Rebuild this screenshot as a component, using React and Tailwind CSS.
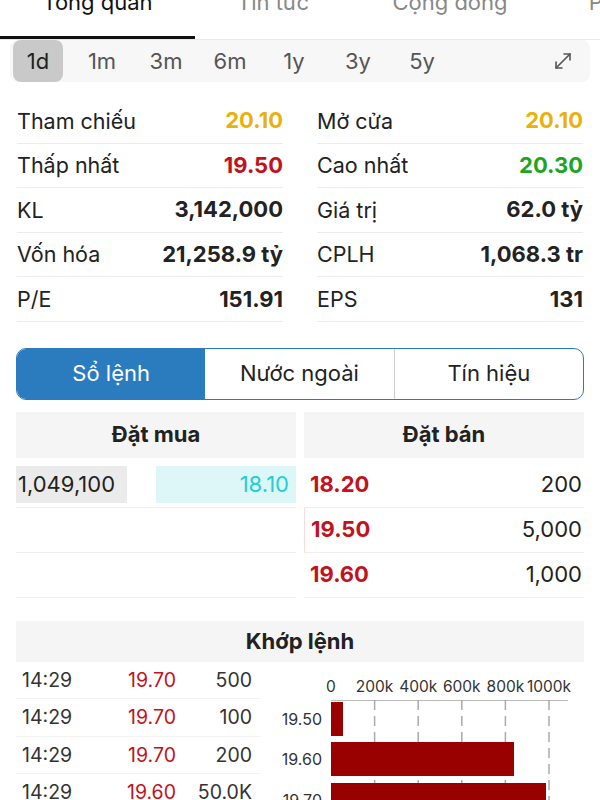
import React from 'react';
import { MoveDiagonal } from 'lucide-react';

const font = { fontFamily: 'Inter, "Noto Sans", sans-serif' };

const topTabs = [
    { label: 'Tổng quan', w: 'w-[195px]', active: true },
    { label: 'Tin tức', w: 'w-[156px]' },
    { label: 'Cộng đồng', w: 'w-[198px]' },
    { label: 'Phân tích', w: 'w-[176px]' },
];

const periods = ['1d', '1m', '3m', '6m', '1y', '3y', '5y'];

const leftStats = [
    { label: 'Tham chiếu', value: '20.10', color: 'text-[#e9b10f]' },
    { label: 'Thấp nhất', value: '19.50', color: 'text-[#c2121c]' },
    { label: 'KL', value: '3,142,000', color: 'text-[#222]' },
    { label: 'Vốn hóa', value: '21,258.9 tỷ', color: 'text-[#222]' },
    { label: 'P/E', value: '151.91', color: 'text-[#222]' },
];

const rightStats = [
    { label: 'Mở cửa', value: '20.10', color: 'text-[#e9b10f]' },
    { label: 'Cao nhất', value: '20.30', color: 'text-[#1ea51e]' },
    { label: 'Giá trị', value: '62.0 tỷ', color: 'text-[#222]' },
    { label: 'CPLH', value: '1,068.3 tr', color: 'text-[#222]' },
    { label: 'EPS', value: '131', color: 'text-[#222]' },
];

const asks = [
    { price: '18.20', vol: '200' },
    { price: '19.50', vol: '5,000' },
    { price: '19.60', vol: '1,000' },
];

const trades = [
    { time: '14:29', price: '19.70', vol: '500' },
    { time: '14:29', price: '19.70', vol: '100' },
    { time: '14:29', price: '19.70', vol: '200' },
    { time: '14:29', price: '19.60', vol: '50.0K' },
];

const StatColumn = ({ rows }) => (
    <div className="flex flex-col">
        {rows.map(r => (
            <div key={r.label} className="flex items-center justify-between h-[44.6px] border-b border-[#ececec]">
                <span className="text-[21.5px] text-[#222]">{r.label}</span>
                <span className={`text-[22px] font-bold ${r.color}`}>{r.value}</span>
            </div>
        ))}
    </div>
);

// horizontal volume chart next to the trade list
const VolumeChart = () => {
    const x0 = 61;
    const step = 43.6;
    const ticks = ['0', '200k', '400k', '600k', '800k', '1000k'];
    const bars = [
        { label: '19.50', y: 40, w: 12 },
        { label: '19.60', y: 80, w: 183 },
        { label: '19.70', y: 121, w: 215 },
    ];
    return (
        <svg width="330" height="138" className="block">
            {ticks.map((t, i) => (
                <text key={t} x={x0 + step * i} y="30" textAnchor="middle" fontSize="15.5" fill="#333" style={font}>{t}</text>
            ))}
            <line x1={x0} y1="38.5" x2="298" y2="38.5" stroke="#bbb" strokeWidth="1" />
            {ticks.map((t, i) => i > 0 && (
                <line key={t} x1={x0 + step * i} y1="38" x2={x0 + step * i} y2="138" stroke="#aaa" strokeWidth="1.5" strokeDasharray="10 6" />
            ))}
            {bars.map(b => (
                <g key={b.label}>
                    <rect x={x0} y={b.y} width={b.w} height="34" fill="#990000" />
                    <text x="52" y={b.y + 23} textAnchor="end" fontSize="16" fill="#333" style={font}>{b.label}</text>
                </g>
            ))}
        </svg>
    );
};

const App = () => {
    return (
        <div className="w-[600px] h-[800px] overflow-hidden bg-white text-[#222]" style={font}>
            {/* Top tabs, scrolled partly out of view */}
            <div className="flex h-[40px] border-b border-[#e8e8e8] overflow-hidden">
                {topTabs.map(t => (
                    <div key={t.label} className={`relative shrink-0 flex justify-center ${t.w}`}>
                        <span className={`-mt-[11px] text-[22px] leading-[26px] whitespace-nowrap ${t.active ? 'text-[#111]' : 'text-[#888]'}`}>{t.label}</span>
                        {t.active && <div className="absolute left-0 right-0 bottom-0 h-[3px] bg-[#111]" />}
                    </div>
                ))}
            </div>

            {/* Period selector */}
            <div className="px-[10px]">
                <div className="flex items-center h-[42px] bg-[#f7f7f7] rounded-[8px]">
                    <div className="flex h-full -ml-[4px]">
                        {periods.map((p, i) => (
                            <div key={p} className="w-[64px] h-full flex items-center justify-center">
                                {i === 0 ? (
                                    <span className="w-[50px] h-full flex items-center justify-center rounded-[8px] bg-[#c9c9c9] text-[22px] text-[#222]">{p}</span>
                                ) : (
                                    <span className="text-[22px] text-[#555]">{p}</span>
                                )}
                            </div>
                        ))}
                    </div>
                    <MoveDiagonal size={24} strokeWidth={1.6} className="ml-auto mr-[15px] text-[#555]" />
                </div>
            </div>

            {/* Quote stats */}
            <div className="grid grid-cols-2 gap-[34px] px-[17px] mt-[17px]">
                <StatColumn rows={leftStats} />
                <StatColumn rows={rightStats} />
            </div>

            {/* Segmented control */}
            <div className="mx-[16px] mt-[26px] h-[52px] flex border border-[#2b7bbf] rounded-[10px] overflow-hidden text-[22px]">
                <div className="flex-1 flex items-center justify-center bg-[#2b7bbf] text-white">Sổ lệnh</div>
                <div className="flex-1 flex items-center justify-center text-[#222] border-r border-[#cfcfcf]">Nước ngoài</div>
                <div className="flex-1 flex items-center justify-center text-[#222]">Tín hiệu</div>
            </div>

            {/* Order book */}
            <div className="grid grid-cols-2 gap-[8px] px-[16px] mt-[12px]">
                <div className="h-[46px] flex items-center justify-center bg-[#f5f5f5] font-bold text-[22px]">Đặt mua</div>
                <div className="h-[46px] flex items-center justify-center bg-[#f5f5f5] font-bold text-[22px]">Đặt bán</div>
            </div>
            <div className="grid grid-cols-2 gap-[8px] px-[16px] mt-[5px]">
                <div className="flex flex-col">
                    <div className="h-[45px] flex items-center border-b border-[#efefef] text-[22px]">
                        <span className="w-[111px] h-[37px] flex items-center pl-[2px] bg-[#ebebeb] text-[#222]">1,049,100</span>
                        <span className="ml-auto w-[140px] h-[37px] flex items-center justify-end pr-[7px] bg-[#ddf6f8] text-[#1fcfd6]">18.10</span>
                    </div>
                    <div className="h-[45px] border-b border-[#efefef]" />
                    <div className="h-[45px] border-b border-[#efefef]" />
                </div>
                <div className="flex flex-col">
                    {asks.map((a, i) => (
                        <div key={a.price} className={`h-[45px] flex items-center justify-between pl-[6px] pr-[2px] border-b border-[#efefef] text-[22px] ${i === 1 ? 'border-l border-l-[#fbdada]' : ''}`}>
                            <span className="font-bold text-[#c2121c]">{a.price}</span>
                            <span className="text-[#222]">{a.vol}</span>
                        </div>
                    ))}
                </div>
            </div>

            {/* Matched trades */}
            <div className="mx-[16px] mt-[23px] h-[41px] flex items-center justify-center bg-[#f5f5f5] font-bold text-[22px]">Khớp lệnh</div>
            <div className="flex pl-[16px]">
                <div className="w-[244px] flex flex-col">
                    {trades.map((t, i) => (
                        <div key={i} className="h-[37.5px] flex items-center border-b border-[#f2f2f2] text-[19.5px]">
                            <span className="pl-[6px] w-[100px] text-[#333]">{t.time}</span>
                            <span className="w-[60px] text-right text-[#c2121c]">{t.price}</span>
                            <span className="w-[76px] text-right text-[#333]">{t.vol}</span>
                        </div>
                    ))}
                </div>
                <div className="ml-[10px]">
                    <VolumeChart />
                </div>
            </div>
        </div>
    );
};

export default App;
